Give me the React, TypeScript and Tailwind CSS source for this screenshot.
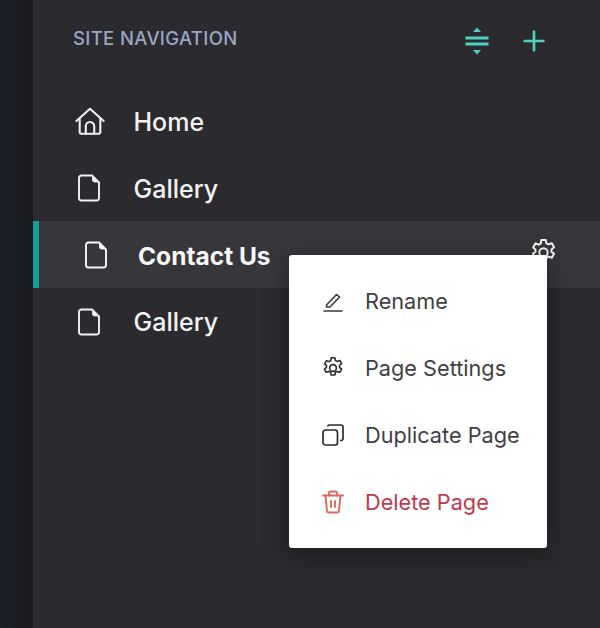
import { Plus } from "lucide-react";

const PageIcon = ({ className = "" }: { className?: string }) => (
  <svg viewBox="0 0 24 28" className={`w-[24px] h-[28px] ${className}`} fill="none" stroke="currentColor" strokeWidth="1.9" strokeLinejoin="round">
    <path d="M4.5 1.5h10.5l7 7v15.5a2.5 2.5 0 0 1-2.5 2.5h-15a2.5 2.5 0 0 1-2.5-2.5v-20a2.5 2.5 0 0 1 2.5-2.5z" />
    <path d="M15.5 2v4a2 2 0 0 0 2 2h4" fill="currentColor" strokeWidth="0.8" />
  </svg>
);

const HomeIcon = () => (
  <svg viewBox="0 0 32 30" className="w-[30px] h-[29px]" fill="none" stroke="currentColor" strokeWidth="2.2" strokeLinejoin="round" strokeLinecap="round">
    <path d="M1.5 14.5 16 1.5l14.5 13" />
    <path d="M5 12v14.5a1.5 1.5 0 0 0 1.5 1.5h19a1.5 1.5 0 0 0 1.5-1.5V12" />
    <path d="M11.5 28v-8a4.5 4.5 0 0 1 9 0v8" />
  </svg>
);

const SortIcon = () => (
  <svg viewBox="0 0 24 28" className="w-[24px] h-[28px] text-[#4fd1c0]" fill="currentColor">
    <path d="M12 0.5 16 5H8z" />
    <rect x="0.5" y="9.5" width="23" height="3" />
    <rect x="0.5" y="15.5" width="23" height="3" />
    <path d="M12 27.5 8 23h8z" />
  </svg>
);

const GearIcon = ({ className }: { className: string }) => (
  <svg viewBox="1 1 22 22" className={className} fill="none" stroke="currentColor" strokeWidth="1.6" strokeLinejoin="round">
    <circle cx="12" cy="12" r="3.4" />
    <path d="M10.2 1.8h3.6l.6 2.7 1.7.9 2.7-.9 1.8 3.2-2.1 1.8v1.8l2.1 1.8-1.8 3.2-2.7-.9-1.7.9-.6 2.7h-3.6l-.6-2.7-1.7-.9-2.7.9-1.8-3.2 2.1-1.8V9.7L3.6 7.9l1.8-3.2 2.7.9 1.7-.9z" />
  </svg>
);

const PencilIcon = () => (
  <svg viewBox="0 0 20 20" className="w-[20px] h-[20px] text-[#3a3a3e]" fill="none" stroke="currentColor" strokeWidth="1.6" strokeLinejoin="round" strokeLinecap="round">
    <path d="M3.5 13 13.5 2.5l3 2.5L7 15H3.5z" />
    <path d="M1 19h18" />
  </svg>
);

const DuplicateIcon = () => (
  <svg viewBox="0 0 22 22" className="w-[22px] h-[22px] text-[#2b2b2f]" fill="none" stroke="currentColor" strokeWidth="1.7" strokeLinejoin="round">
    <rect x="1" y="6" width="14.5" height="15" rx="2.5" />
    <path d="M6 2.5V2a1 1 0 0 1 1-1h12a2 2 0 0 1 2 2v12a2 2 0 0 1-2 1.5h-1" />
  </svg>
);

const TrashIcon = () => (
  <svg viewBox="0 0 22 24" className="w-[22px] h-[24px] text-[#e0665e]" fill="none" stroke="currentColor" strokeWidth="1.9" strokeLinejoin="round" strokeLinecap="round">
    <path d="M1 5.5h20" />
    <path d="M7 5.5V3a1.5 1.5 0 0 1 1.5-1.5h5A1.5 1.5 0 0 1 15 3v2.5" />
    <path d="M3.5 5.5 5 21a1.5 1.5 0 0 0 1.5 1.5h9A1.5 1.5 0 0 0 17 21l1.5-15.5" />
    <path d="M9 11v6M13 11v6" />
  </svg>
);

const NavRow = ({ label }: { label: string }) => (
  <div className="h-[66.7px] flex items-center pl-[44px] text-[#f2f2f2]">
    <PageIcon />
    <span className="ml-[32.5px] pt-[3px] text-[25px] font-medium">{label}</span>
  </div>
);

const menuItems = [
  { label: "Rename", icon: <PencilIcon />, color: "text-[#3f3f44]" },
  { label: "Page Settings", icon: <GearIcon className="w-[22px] h-[22px] text-[#2b2b2f]" />, color: "text-[#3f3f44]" },
  { label: "Duplicate Page", icon: <DuplicateIcon />, color: "text-[#3f3f44]" },
  { label: "Delete Page", icon: <TrashIcon />, color: "text-[#c0394b]" },
];

export default function App() {
  return (
    <div className="w-[600px] h-[628px] flex overflow-hidden bg-[#2b2b2f] font-['Inter',sans-serif]">
      {/* left strip */}
      <div className="w-[33px] shrink-0 bg-gradient-to-r from-[#1c1f26] to-[#1a1b1f]" />

      <div className="flex-1 min-w-0">
        {/* header */}
        <div className="h-[88px] pt-[25px] pl-[40px] pr-[50px] flex items-start justify-between">
          <span className="text-[18.5px] leading-[27px] font-medium tracking-[0.35px] text-[#9ba5c4]">SITE NAVIGATION</span>
          <div className="flex items-center gap-[29px]">
            <SortIcon />
            <Plus className="w-[32px] h-[32px] text-[#4fd1c0]" strokeWidth={2} />
          </div>
        </div>

        {/* pages */}
        <div className="h-[66.7px] flex items-center pl-[42px] text-[#f2f2f2]">
          <HomeIcon />
          <span className="ml-[28.5px] pt-[3px] text-[25px] font-medium">Home</span>
        </div>
        <NavRow label="Gallery" />

        <div className="relative h-[67px] flex items-center bg-[#37373b] border-l-[6px] border-[#14a096] pl-[45px] pr-[43px] text-[#f7f7f7]">
          <PageIcon />
          <span className="ml-[30px] pt-[3px] text-[24.5px] font-bold whitespace-nowrap">Contact Us</span>
          <GearIcon className="ml-auto w-[27px] h-[27px] -mt-[4px]" />

          {/* page menu */}
          <div className="absolute left-[250px] top-[34px] w-[258px] h-[293px] py-[13px] px-[33px] rounded-[3px] bg-white shadow-[0_6px_24px_rgba(0,0,0,0.4)]">
            {menuItems.map((item) => (
              <div key={item.label} className="h-[66.7px] flex items-center">
                <div className="w-[22px] flex justify-center">{item.icon}</div>
                <span className={`ml-[21px] text-[21.7px] whitespace-nowrap ${item.color}`}>{item.label}</span>
              </div>
            ))}
          </div>
        </div>

        <NavRow label="Gallery" />
      </div>
    </div>
  );
}
